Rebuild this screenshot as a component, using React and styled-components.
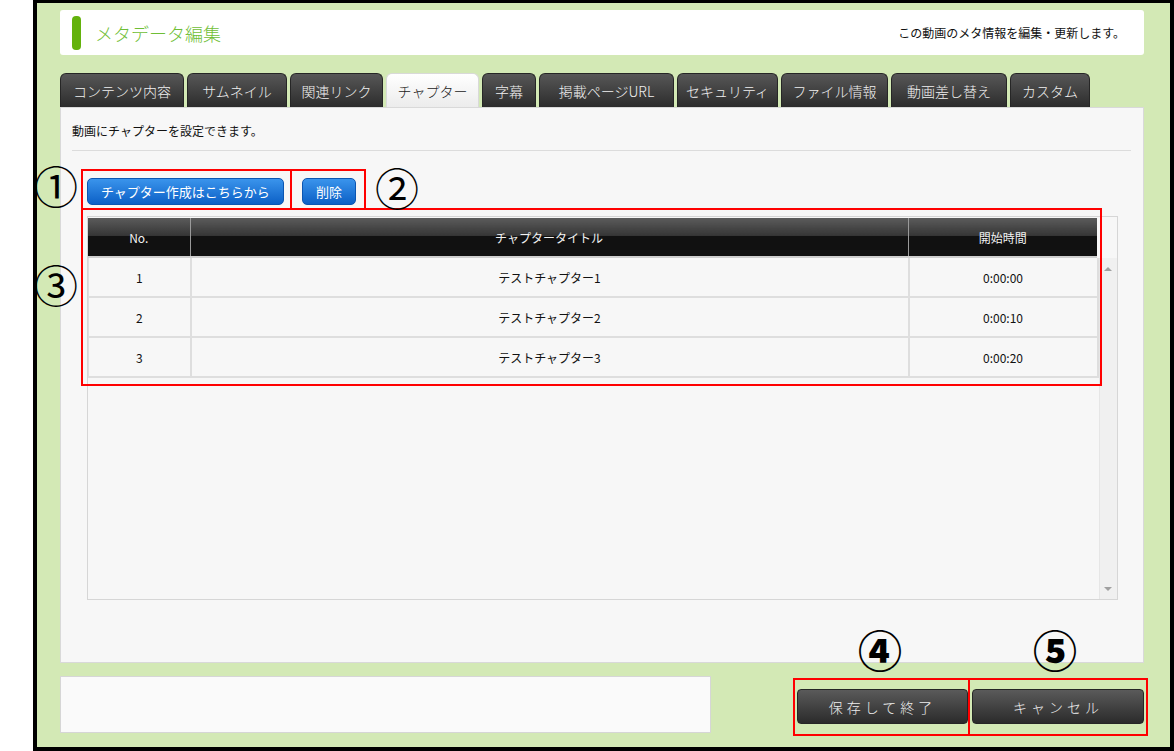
import React from "react";
import styled, { createGlobalStyle } from "styled-components";

const GlobalStyle = createGlobalStyle`
  html, body {
    margin: 0;
    padding: 0;
    background: #fff;
  }
  body {
    font-family: "Noto Sans CJK JP", "Noto Sans", sans-serif;
    color: #222;
  }
`;

const Page = styled.div`
  position: relative;
  width: 1174px;
  height: 751px;
  overflow: hidden;
`;

const Frame = styled.div`
  box-sizing: border-box;
  margin-left: 33px;
  width: 1141px;
  height: 751px;
  border: 4px solid #000;
  border-top-width: 3px;
  background: #d3e9b5;
  padding: 7px 26px 0 23px;
  display: flex;
  flex-direction: column;
`;

const Header = styled.div`
  height: 45px;
  background: #fff;
  border-radius: 3px;
  display: flex;
  align-items: center;
  padding: 0 19px 0 12px;
`;

const HeaderBar = styled.div`
  width: 9px;
  height: 34px;
  border-radius: 4px;
  background: #63b20c;
`;

const HeaderTitle = styled.h1`
  margin: 0 0 0 14px;
  font-size: 18px;
  font-weight: 300;
  color: #6fbe36;
  flex: 1;
`;

const HeaderNote = styled.p`
  margin: 0;
  font-size: 12px;
  color: #111;
`;

const Tabs = styled.div`
  display: flex;
  gap: 3px;
  margin-top: 18px;
  height: 34px;
`;

const Tab = styled.div`
  box-sizing: border-box;
  width: ${(p) => p.$w}px;
  border-radius: 6px 6px 0 0;
  display: flex;
  align-items: center;
  justify-content: center;
  font-size: 14px;
  font-weight: 300;
  white-space: nowrap;
  color: ${(p) => (p.$active ? "#1a1a1a" : "#f0f0f0")};
  background: ${(p) =>
    p.$active
      ? "linear-gradient(#ffffff, #ececec)"
      : "linear-gradient(#575757, #2c2c2c)"};
  border: 1px solid ${(p) => (p.$active ? "#d9d9d9" : "#262626")};
  border-bottom: none;
`;

const Panel = styled.div`
  box-sizing: border-box;
  height: 556px;
  background: #f7f7f7;
  border: 1px solid #d9d9d9;
  padding: 0 12px 0 11px;
`;

const Lead = styled.p`
  margin: 0;
  padding-top: 15px;
  line-height: 16px;
  font-size: 12px;
  color: #111;
`;

const Rule = styled.div`
  margin-top: 11px;
  height: 1px;
  background: #dcdcdc;
`;

const Actions = styled.div`
  display: flex;
  gap: 18px;
  margin: 27px 0 0 15px;
`;

const BlueButton = styled.button`
  height: 27px;
  padding: 0 13px;
  border: 1px solid #0b56b2;
  border-radius: 5px;
  background: linear-gradient(#3a94ec, #0c60c6);
  color: #fff;
  font-family: inherit;
  font-size: 13px;
  line-height: 1;
  cursor: pointer;
`;

const ScrollBox = styled.div`
  box-sizing: border-box;
  margin: 11px 13px 0 15px;
  height: 384px;
  border: 1px solid #d6d6d6;
  background: #f7f7f7;
  padding-top: 1px;
  display: flex;
  flex-direction: column;
`;

const Grid = styled.table`
  width: 1009px;
  border-collapse: collapse;
  table-layout: fixed;
`;

const Th = styled.th`
  height: 38px;
  padding: 0;
  font-size: 12px;
  font-weight: 400;
  color: #f2f2f2;
  background: linear-gradient(#5b5b5b 0%, #363636 46%, #111 48%, #111 100%);
  border-left: 1px solid #9a9a9a;
  border-bottom: 2px solid #cfcfcf;
  &:first-child {
    border-left: none;
  }
`;

const Body = styled.div`
  flex: 1;
  display: flex;
`;

const Td = styled.td`
  height: 38px;
  padding: 0;
  text-align: center;
  font-size: 12px;
  color: #111;
  background: #f7f7f7;
  border: 2px solid #dedede;
  border-top: none;
  &:first-child {
    border-left-width: 1px;
  }
`;

const Track = styled.div`
  flex: 1;
  background: #f0f0f0;
  border-left: 1px solid #e6e6e6;
  display: flex;
  flex-direction: column;
  justify-content: space-between;
  align-items: center;
  padding: 9px 0 8px;
`;

const Arrow = styled.span`
  width: 0;
  height: 0;
  border-left: 4px solid transparent;
  border-right: 4px solid transparent;
  ${(p) =>
    p.$down
      ? "border-top: 4px solid #a0a0a0;"
      : "border-bottom: 4px solid #a0a0a0;"}
`;

const Footer = styled.div`
  display: flex;
  justify-content: space-between;
  align-items: flex-start;
  margin-top: 13px;
`;

const NoteBox = styled.div`
  box-sizing: border-box;
  width: 651px;
  height: 57px;
  background: #fafafa;
  border: 1px solid #d6d6d6;
`;

const FooterButtons = styled.div`
  display: flex;
  gap: 4px;
  margin-top: 13px;
`;

const DarkButton = styled.button`
  box-sizing: border-box;
  width: ${(p) => p.$w}px;
  height: 35px;
  border: 1px solid #262626;
  border-radius: 4px;
  background: linear-gradient(#5a5a5a, #2b2b2b);
  color: #eee;
  font-family: inherit;
  font-size: 14px;
  font-weight: 300;
  letter-spacing: 4px;
  cursor: pointer;
`;

/* red callout frames and their circled numbers, laid over the screen */
const Callout = styled.div`
  position: absolute;
  left: ${(p) => p.$x}px;
  top: ${(p) => p.$y}px;
  width: ${(p) => p.$w}px;
  height: ${(p) => p.$h}px;
  box-sizing: border-box;
  border: 2px solid #f00;
  pointer-events: none;
`;

const Marker = styled.span`
  position: absolute;
  left: ${(p) => p.$x}px;
  top: ${(p) => p.$y}px;
  font-size: 44px;
  line-height: 1;
  font-weight: ${(p) => (p.$bold ? 900 : 400)};
  color: #000;
`;

const tabs = [
  { label: "コンテンツ内容", w: 124 },
  { label: "サムネイル", w: 100 },
  { label: "関連リンク", w: 93 },
  { label: "チャプター", w: 93, active: true },
  { label: "字幕", w: 54 },
  { label: "掲載ページURL", w: 135 },
  { label: "セキュリティ", w: 101 },
  { label: "ファイル情報", w: 107 },
  { label: "動画差し替え", w: 116 },
  { label: "カスタム", w: 80 },
];

const chapters = [
  { no: 1, title: "テストチャプター1", start: "0:00:00" },
  { no: 2, title: "テストチャプター2", start: "0:00:10" },
  { no: 3, title: "テストチャプター3", start: "0:00:20" },
];

const cols = [102, 718, 189];

const Columns = () => (
  <colgroup>
    {cols.map((w, i) => (
      <col key={i} style={{ width: w }} />
    ))}
  </colgroup>
);

export default function App() {
  return (
    <Page>
      <GlobalStyle />
      <Frame>
        <Header>
          <HeaderBar />
          <HeaderTitle>メタデータ編集</HeaderTitle>
          <HeaderNote>この動画のメタ情報を編集・更新します。</HeaderNote>
        </Header>

        <Tabs>
          {tabs.map((t) => (
            <Tab key={t.label} $w={t.w} $active={t.active}>
              {t.label}
            </Tab>
          ))}
        </Tabs>

        <Panel>
          <Lead>動画にチャプターを設定できます。</Lead>
          <Rule />
          <Actions>
            <BlueButton>チャプター作成はこちらから</BlueButton>
            <BlueButton>削除</BlueButton>
          </Actions>

          <ScrollBox>
            <Grid>
              <Columns />
              <thead>
                <tr>
                  <Th>No.</Th>
                  <Th>チャプタータイトル</Th>
                  <Th>開始時間</Th>
                </tr>
              </thead>
            </Grid>
            <Body>
              <div>
                <Grid>
                  <Columns />
                  <tbody>
                    {chapters.map((c) => (
                      <tr key={c.no}>
                        <Td>{c.no}</Td>
                        <Td>{c.title}</Td>
                        <Td>{c.start}</Td>
                      </tr>
                    ))}
                  </tbody>
                </Grid>
              </div>
              <Track>
                <Arrow />
                <Arrow $down />
              </Track>
            </Body>
          </ScrollBox>
        </Panel>

        <Footer>
          <NoteBox />
          <FooterButtons>
            <DarkButton $w={171}>保存して終了</DarkButton>
            <DarkButton $w={172}>キャンセル</DarkButton>
          </FooterButtons>
        </Footer>
      </Frame>

      <Callout $x={81} $y={169} $w={211} $h={41} />
      <Callout $x={290} $y={169} $w={76} $h={41} />
      <Callout $x={81} $y={208} $w={1021} $h={178} />
      <Callout $x={793} $y={678} $w={177} $h={58} />
      <Callout $x={968} $y={678} $w={180} $h={58} />

      <Marker $x={34} $y={163}>①</Marker>
      <Marker $x={375} $y={165}>②</Marker>
      <Marker $x={34} $y={262}>③</Marker>
      <Marker $x={858} $y={627} $bold>④</Marker>
      <Marker $x={1033} $y={627} $bold>⑤</Marker>
    </Page>
  );
}
